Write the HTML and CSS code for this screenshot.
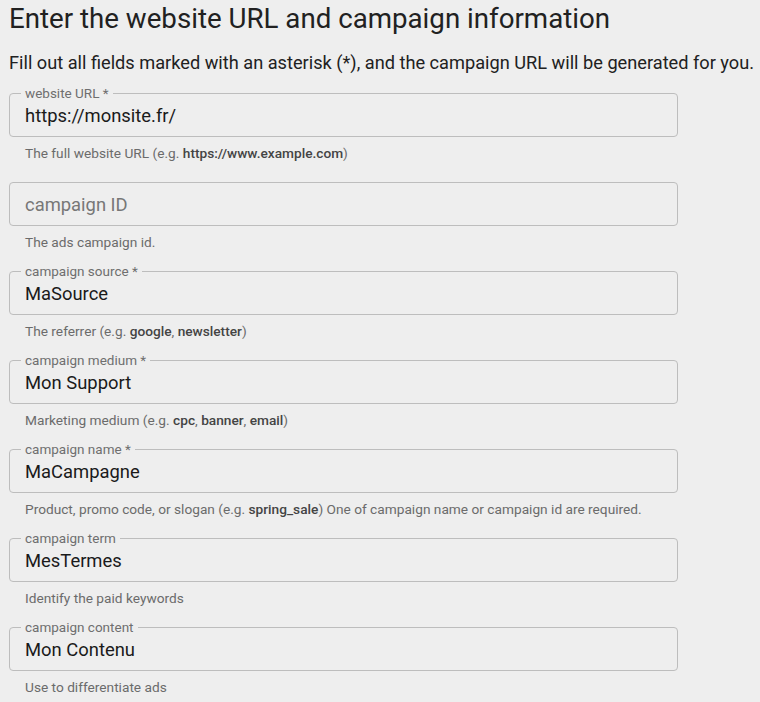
FILE: index.html
```html
<!DOCTYPE html>
<html lang="en">
<head>
    <meta charset="UTF-8">
    <meta name="viewport" content="width=device-width, initial-scale=1.0">
    <title>Campaign URL Builder</title>
    <link rel="stylesheet" href="styles.css">
</head>
<body>
    <div class="builder">
        <h1>Enter the website URL and campaign information</h1>
        <p class="intro">Fill out all fields marked with an asterisk (*), and the campaign URL will be generated for you.</p>

        <div class="field">
            <fieldset class="outline">
                <legend>website URL *</legend>
                <input type="text" value="https://monsite.fr/">
            </fieldset>
            <p class="hint">The full website URL (e.g. <b>https://www.example.com</b>)</p>
        </div>

        <div class="field no-label">
            <fieldset class="outline empty">
                <input type="text" placeholder="campaign ID">
            </fieldset>
            <p class="hint">The ads campaign id.</p>
        </div>

        <div class="field">
            <fieldset class="outline">
                <legend>campaign source *</legend>
                <input type="text" value="MaSource">
            </fieldset>
            <p class="hint">The referrer (e.g. <b>google</b>, <b>newsletter</b>)</p>
        </div>

        <div class="field">
            <fieldset class="outline">
                <legend>campaign medium *</legend>
                <input type="text" value="Mon Support">
            </fieldset>
            <p class="hint">Marketing medium (e.g. <b>cpc</b>, <b>banner</b>, <b>email</b>)</p>
        </div>

        <div class="field">
            <fieldset class="outline">
                <legend>campaign name *</legend>
                <input type="text" value="MaCampagne">
            </fieldset>
            <p class="hint">Product, promo code, or slogan (e.g. <b>spring_sale</b>) One of campaign name or campaign id are required.</p>
        </div>

        <div class="field">
            <fieldset class="outline">
                <legend>campaign term</legend>
                <input type="text" value="MesTermes">
            </fieldset>
            <p class="hint">Identify the paid keywords</p>
        </div>

        <div class="field">
            <fieldset class="outline">
                <legend>campaign content</legend>
                <input type="text" value="Mon Contenu">
            </fieldset>
            <p class="hint">Use to differentiate ads</p>
        </div>
    </div>
</body>
</html>
```

FILE: styles.css
```css
body {
    margin: 0;
    background: #eeeeee;
    font-family: Roboto, "Liberation Sans", sans-serif;
    color: #212121;
}

.builder {
    padding: 0 9px;
}

h1 {
    margin: 0;
    padding-top: 2px;
    font-size: 27.7px;
    font-weight: 400;
    line-height: 34px;
    color: #212121;
}

.intro {
    margin: 15px 0 0;
    font-size: 18.2px;
    line-height: 24px;
    white-space: nowrap;
}

.field {
    width: 669px;
    margin-top: 11px;
}

.field + .field {
    margin-top: 13px;
}

/* no legend: keep the box where a labelled one would sit */
.field.no-label {
    padding-top: 7px;
}

.outline {
    margin: 0;
    padding: 0 15px 6px;
    border: 1px solid #bdbdbd;
    border-radius: 4px;
}

.outline.empty {
    padding-top: 6px;
}

legend {
    margin-left: -4px;
    padding: 0 4px;
    font-size: 13.5px;
    line-height: 14px;
    color: #6f6f6f;
}

input {
    display: block;
    width: 100%;
    height: 30px;
    padding: 0;
    border: none;
    outline: none;
    background: transparent;
    font-family: inherit;
    font-size: 18.4px;
    color: #1a1a1a;
}

input::placeholder {
    color: #777;
}

.hint {
    margin: 7px 0 0 16px;
    font-size: 13.7px;
    line-height: 18px;
    color: #6b6b6b;
}

.hint b {
    font-weight: 500;
    color: #444;
}
```
